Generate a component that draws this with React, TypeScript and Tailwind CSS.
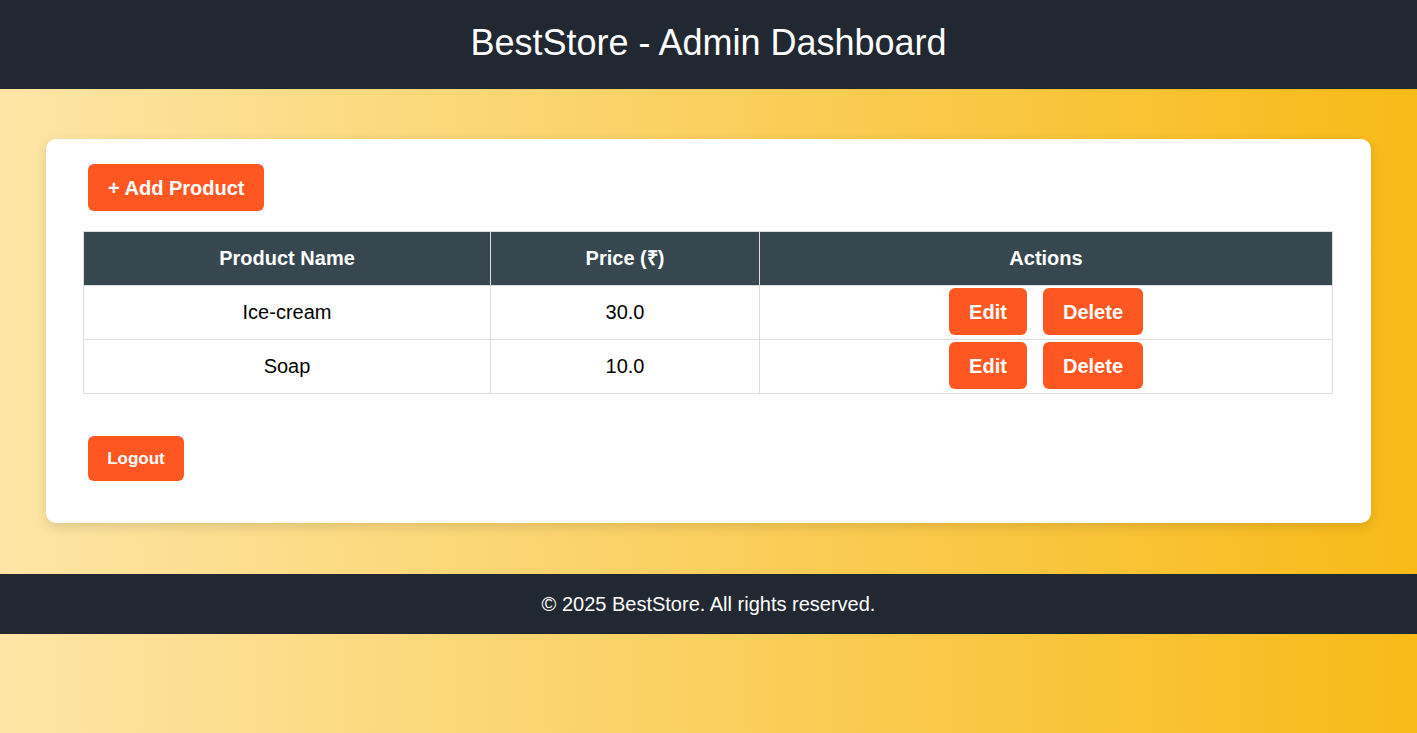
import React from "react";

const products = [
  { name: "Ice-cream", price: "30.0" },
  { name: "Soap", price: "10.0" },
];

export default function App() {
  return (
    <div
      className="min-h-screen w-full bg-[linear-gradient(to_right,#fde5a6,#f8ba18)] text-black"
      style={{ fontFamily: '"Liberation Sans", Arial, sans-serif' }}
    >
      <header className="h-[89px] bg-[#222831] flex items-center justify-center pb-[4px]">
        <h1 className="text-[36px] text-white leading-none">BestStore - Admin Dashboard</h1>
      </header>

      <main className="mx-[46px] mt-[50px] mb-[51px] bg-white rounded-[10px] shadow-[0_4px_12px_rgba(0,0,0,0.12)] pt-[25px] pb-[42px] pl-[37px] pr-[38px]">
        <div className="pl-[5px]">
          <button className="h-[47px] px-[20px] bg-[#ff5722] text-white font-bold text-[20px] rounded-[6px]">
            + Add Product
          </button>
        </div>

        <table className="w-full mt-[20px] border-collapse text-[20px]">
          <thead>
            <tr className="bg-[#37474f] text-white h-[54px]">
              <th className="w-[407px] border border-[#ddd] font-bold pb-[2px]">Product Name</th>
              <th className="w-[269px] border border-[#ddd] font-bold pb-[2px]">Price (₹)</th>
              <th className="border border-[#ddd] font-bold pb-[2px]">Actions</th>
            </tr>
          </thead>
          <tbody>
            {products.map((p) => (
              <tr key={p.name} className="h-[54px]">
                <td className="border border-[#ddd] text-center pb-[2px]">{p.name}</td>
                <td className="border border-[#ddd] text-center pb-[2px]">{p.price}</td>
                <td className="border border-[#ddd] pb-[2px]">
                  <div className="flex justify-center gap-[16px]">
                    <button className="h-[47px] w-[78px] bg-[#ff5722] text-white font-bold text-[20px] rounded-[6px]">
                      Edit
                    </button>
                    <button className="h-[47px] w-[100px] bg-[#ff5722] text-white font-bold text-[20px] rounded-[6px]">
                      Delete
                    </button>
                  </div>
                </td>
              </tr>
            ))}
          </tbody>
        </table>

        <div className="pl-[5px] mt-[42px]">
          <button className="h-[45px] w-[96px] bg-[#ff5722] text-white font-bold text-[17px] rounded-[6px]">
            Logout
          </button>
        </div>
      </main>

      <footer className="h-[60px] bg-[#222831] flex items-center justify-center">
        <p className="text-white text-[20px]">© 2025 BestStore. All rights reserved.</p>
      </footer>
    </div>
  );
}
